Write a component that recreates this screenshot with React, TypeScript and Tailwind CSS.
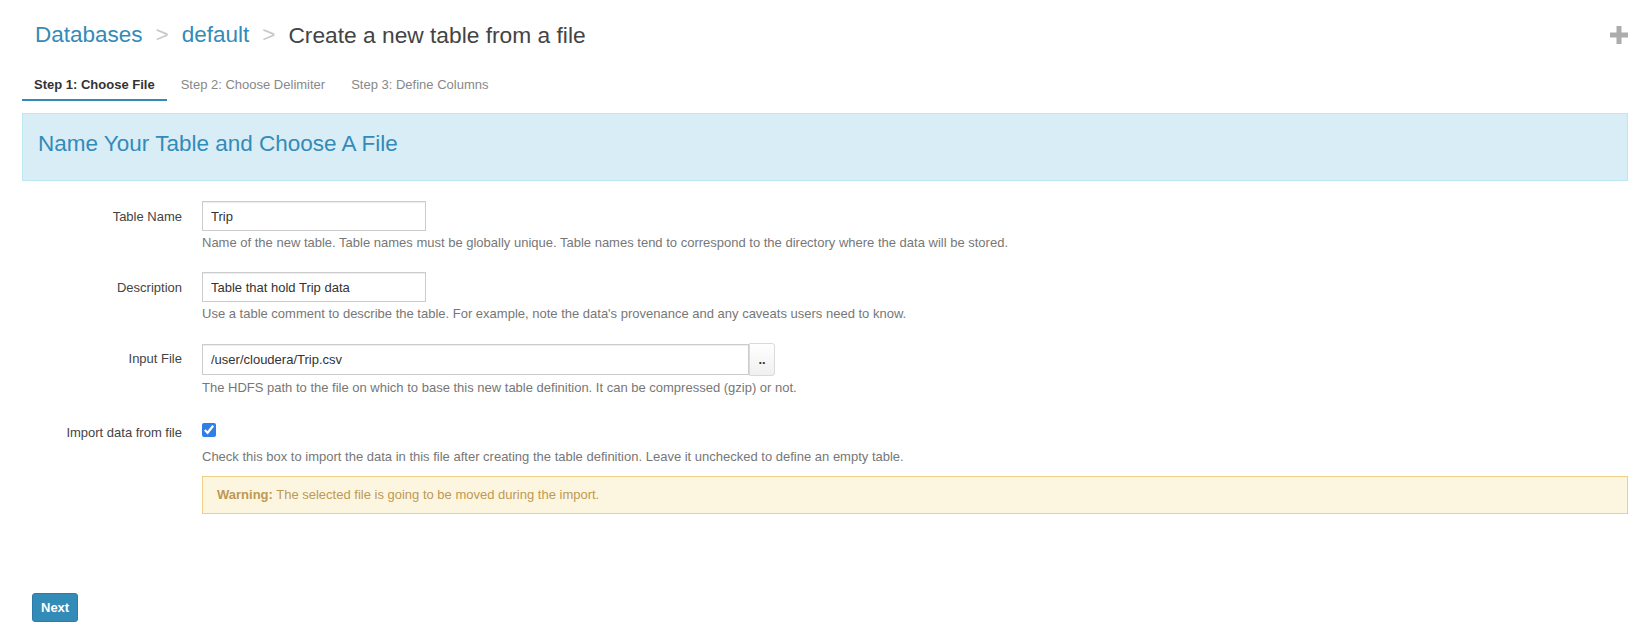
import React from 'react';

const PlusIcon = () => (
  <svg width="18" height="18" viewBox="0 0 18 18">
    <path d="M6.5 0h5v6.5H18v5h-6.5V18h-5v-6.5H0v-5h6.5z" fill="#acacac" />
  </svg>
);

function Field({ label, help, children }: { label: string; help: string; children: React.ReactNode }) {
  return (
    <div className="flex mb-[20px]">
      <label className="w-[160px] shrink-0 text-right pt-[7px] leading-[18px] text-[13px] text-[#444]">{label}</label>
      <div className="ml-[20px] flex-1">
        {children}
        <div className="mt-[3px] leading-[18px] text-[13px] text-[#777]">{help}</div>
      </div>
    </div>
  );
}

export default function App() {
  const tabs = ['Step 1: Choose File', 'Step 2: Choose Delimiter', 'Step 3: Define Columns'];

  return (
    <div className="min-h-[636px] bg-white pl-[22px] pr-[20px] font-['Liberation_Sans',Arial,sans-serif]">
      <div className="flex items-center justify-between pt-[22px] h-[48px]">
        <div className="flex items-center pl-[13px] text-[22.5px] leading-[26px]">
          <a className="text-[#338bb8]">Databases</a>
          <span className="mx-[13px] text-[#c8c8c8]">&gt;</span>
          <a className="text-[#338bb8]">default</a>
          <span className="mx-[13px] text-[#c8c8c8]">&gt;</span>
          <span className="text-[22.75px] text-[#444]">Create a new table from a file</span>
        </div>
        <PlusIcon />
      </div>

      <div className="flex mt-[25px] text-[13px] leading-[18px]">
        {tabs.map((t, i) => (
          <div
            key={t}
            className={
              i === 0
                ? 'mr-[2px] px-[12px] pt-[3px] pb-[5px] border-b-2 border-[#338bb8] font-bold text-[#333]'
                : 'mr-[2px] px-[12px] pt-[3px] pb-[5px] border-b-2 border-transparent text-[#888]'
            }
          >
            {t}
          </div>
        ))}
      </div>

      <div className="mt-[12px] border border-[#bce8f1] bg-[#d9edf7] pl-[15px] pt-[16px] pb-[22px]">
        <h3 className="text-[22.5px] leading-[28px] text-[#338bb8]">Name Your Table and Choose A File</h3>
      </div>

      <div className="mt-[20px]">
        <Field label="Table Name" help="Name of the new table. Table names must be globally unique. Table names tend to correspond to the directory where the data will be stored.">
          <input
            readOnly
            value="Trip"
            className="w-[224px] h-[30px] border border-[#ccc] px-[8px] text-[13px] text-[#333] shadow-[inset_0_1px_1px_rgba(0,0,0,0.075)] outline-none"
          />
        </Field>
        <Field label="Description" help="Use a table comment to describe the table. For example, note the data's provenance and any caveats users need to know.">
          <input
            readOnly
            value="Table that hold Trip data"
            className="w-[224px] h-[30px] border border-[#ccc] px-[8px] text-[13px] text-[#333] shadow-[inset_0_1px_1px_rgba(0,0,0,0.075)] outline-none"
          />
        </Field>
        <Field label="Input File" help="The HDFS path to the file on which to base this new table definition. It can be compressed (gzip) or not.">
          <div className="flex items-start">
            <input
              readOnly
              value="/user/cloudera/Trip.csv"
              className="mt-[1px] w-[547px] h-[31px] border border-[#ccc] px-[8px] text-[13px] text-[#333] shadow-[inset_0_1px_1px_rgba(0,0,0,0.075)] outline-none"
            />
            <button className="w-[26px] h-[33px] border border-[#dadada] rounded-r-[3px] bg-gradient-to-b from-white to-[#f0f0f0] text-[13px] font-bold leading-none text-[#333]">
              ..
            </button>
          </div>
        </Field>

        <div className="flex">
          <label className="w-[160px] shrink-0 text-right pt-[7px] leading-[18px] text-[13px] text-[#444]">Import data from file</label>
          <div className="ml-[20px] flex-1">
            <div className="h-[30px] pt-[6px]">
              <input type="checkbox" checked readOnly className="block m-0 w-[14px] h-[14px] accent-[#2f7fe6]" />
            </div>
            <div className="mt-[1px] leading-[18px] text-[13px] text-[#777]">
              Check this box to import the data in this file after creating the table definition. Leave it unchecked to define an empty table.
            </div>
            <div className="mt-[10px] border border-[#efcf86] bg-[#fcf6e1] px-[14px] py-[9px] leading-[18px] text-[13px] text-[#c09853]">
              <b>Warning:</b> The selected file is going to be moved during the import.
            </div>
          </div>
        </div>
      </div>

      <div className="mt-[79px] pl-[10px]">
        <button className="h-[29px] px-[8px] rounded-[3px] border border-[#2c7cab] bg-[#338bb8] text-[13px] font-bold text-white">
          Next
        </button>
      </div>
    </div>
  );
}
